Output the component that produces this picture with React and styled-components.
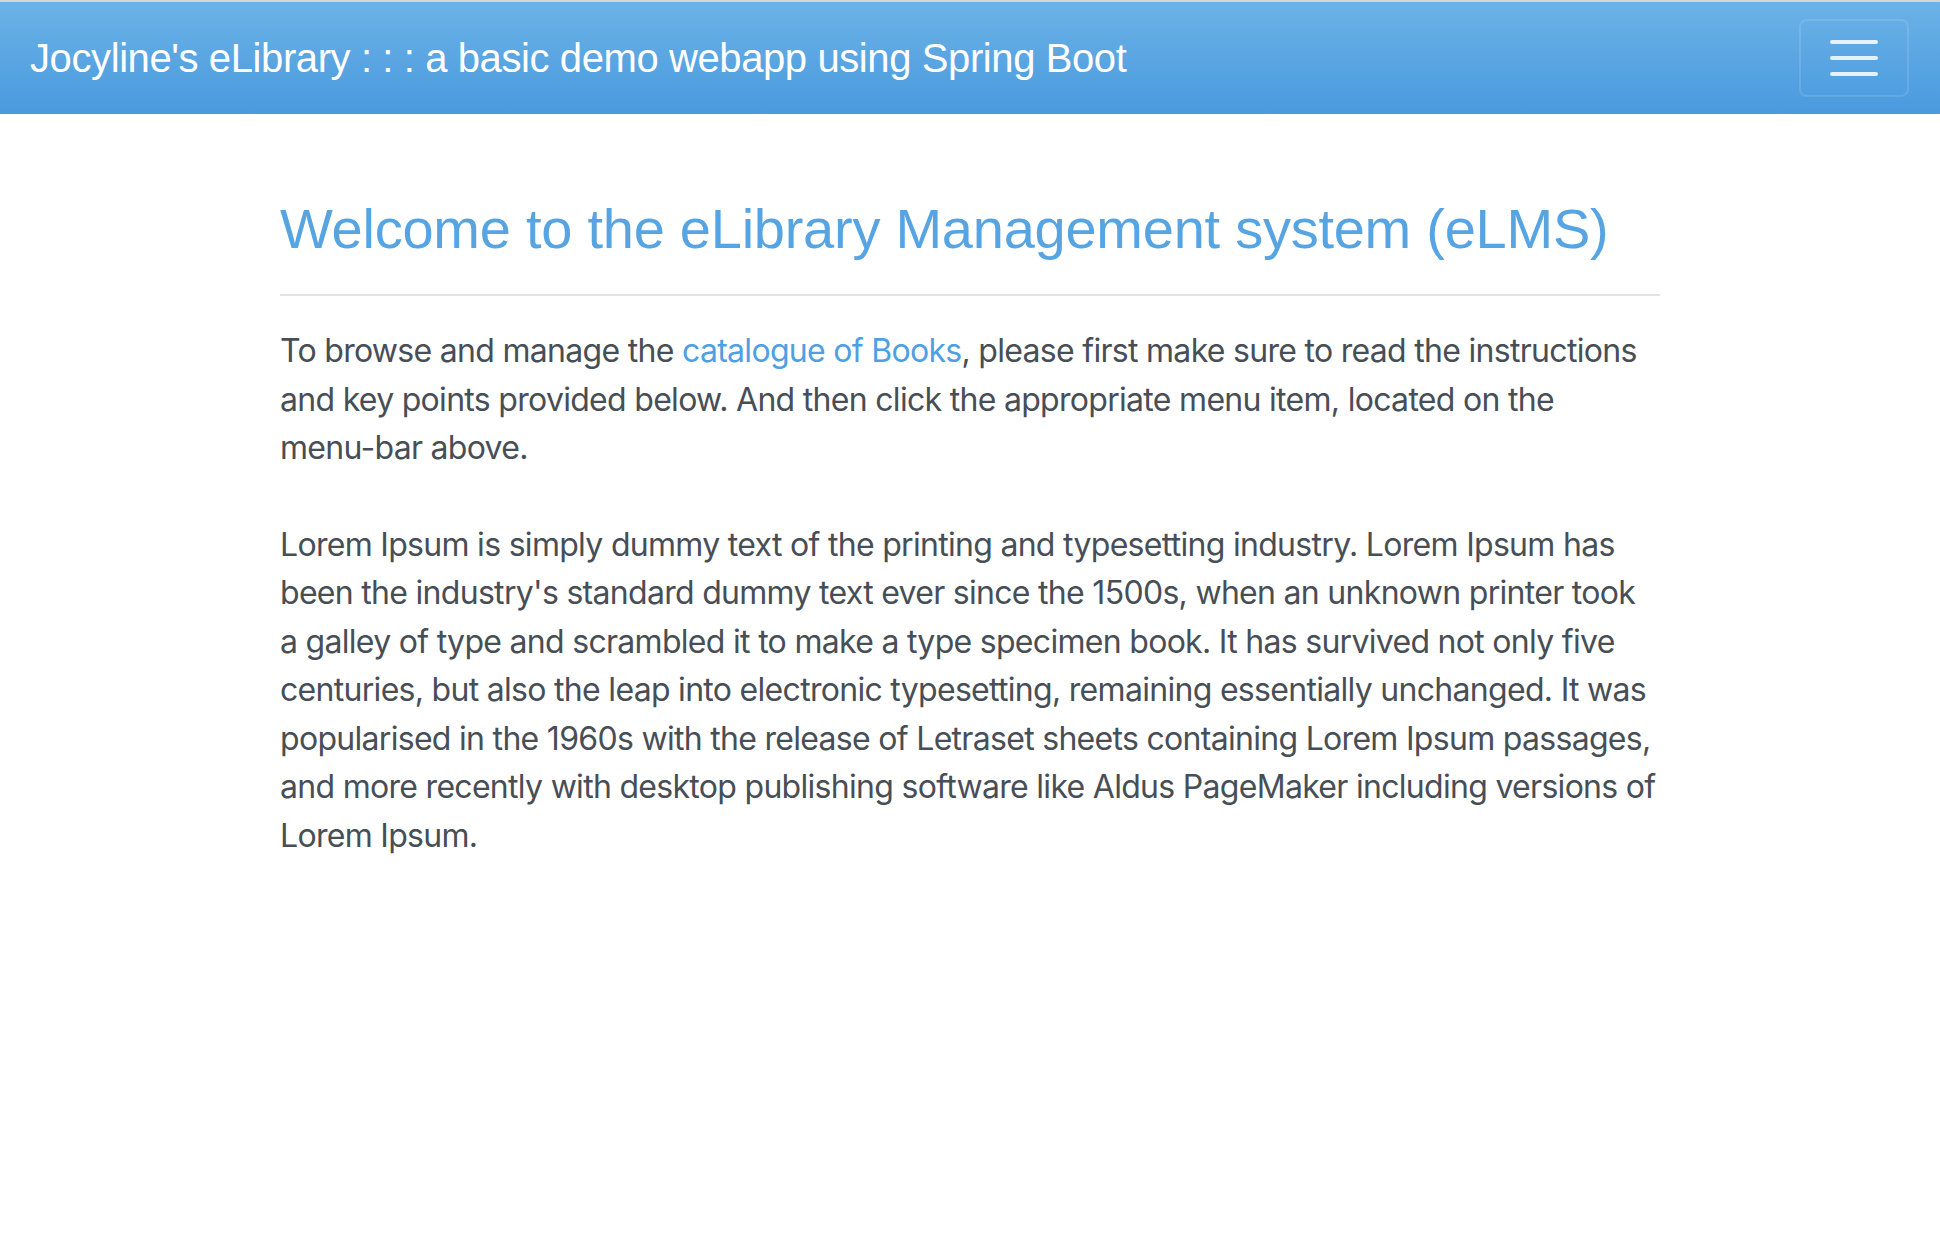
import React from "react";
import styled, { createGlobalStyle } from "styled-components";

const GlobalStyle = createGlobalStyle`
  * { box-sizing: border-box; }
  body {
    margin: 0;
    background: #fff;
    border-top: 2px solid #d4d4d4;
    font-family: Inter, "Noto Sans", sans-serif;
    color: #474e56;
  }
`;

const Navbar = styled.nav`
  height: 112px;
  display: flex;
  align-items: center;
  justify-content: space-between;
  padding: 0 31px 0 30px;
  background: linear-gradient(180deg, #6bb2e7 0%, #4a9ade 100%);
`;

const Brand = styled.a`
  color: #fff;
  font-family: "Liberation Sans", Arial, sans-serif;
  font-size: 40px;
  line-height: 60px;
  text-decoration: none;
  letter-spacing: -0.4px;
`;

const Toggler = styled.button`
  width: 110px;
  height: 78px;
  display: flex;
  flex-direction: column;
  align-items: center;
  justify-content: center;
  gap: 12px;
  background: transparent;
  border: 2px solid rgba(255, 255, 255, 0.12);
  border-radius: 8px;
  padding: 0;
`;

const Bar = styled.span`
  display: block;
  width: 48px;
  height: 4px;
  border-radius: 2px;
  background: rgba(255, 255, 255, 0.85);
`;

const Container = styled.main`
  max-width: 1440px;
  margin: 0 auto;
  padding: 81px 30px 0;
`;

const Title = styled.h1`
  margin: 0;
  font-family: "Liberation Sans", Arial, sans-serif;
  font-weight: 400;
  font-size: 56px;
  line-height: 67px;
  color: #57a4e3;
  letter-spacing: -0.25px;
`;

const Rule = styled.hr`
  margin: 32px 0 31px;
  border: 0;
  border-top: 2px solid #e3e3e3;
`;

const Para = styled.p`
  margin: 0 0 ${(p) => p.$gap || 0}px;
  font-size: 32px;
  line-height: 48.5px;
  letter-spacing: -0.7px;
`;

const Link = styled.a`
  color: #4fa0e2;
  text-decoration: none;
`;

const NoWrap = styled.span`
  white-space: nowrap;
`;

export default function App() {
  return (
    <>
      <GlobalStyle />
      <Navbar>
        <Brand href="#">Jocyline's eLibrary : : : a basic demo webapp using Spring Boot</Brand>
        <Toggler aria-label="Toggle navigation">
          <Bar />
          <Bar />
          <Bar />
        </Toggler>
      </Navbar>
      <Container>
        <Title>Welcome to the eLibrary Management system (eLMS)</Title>
        <Rule />
        <Para $gap={48}>
          To browse and manage the <Link href="#">catalogue of Books</Link>, please first make sure to read the
          instructions and key points provided below. And then click the appropriate menu item, located on the{" "}
          <NoWrap>menu-bar</NoWrap> above.
        </Para>
        <Para>
          Lorem Ipsum is simply dummy text of the printing and typesetting industry. Lorem Ipsum has been the
          industry's standard dummy text ever since the 1500s, when an unknown printer took a galley of type and
          scrambled it to make a type specimen book. It has survived not only five centuries, but also the leap
          into electronic typesetting, remaining essentially unchanged. It was popularised in the 1960s with the
          release of Letraset sheets containing Lorem Ipsum passages, and more recently with desktop publishing
          software like Aldus PageMaker including versions of Lorem Ipsum.
        </Para>
      </Container>
    </>
  );
}
